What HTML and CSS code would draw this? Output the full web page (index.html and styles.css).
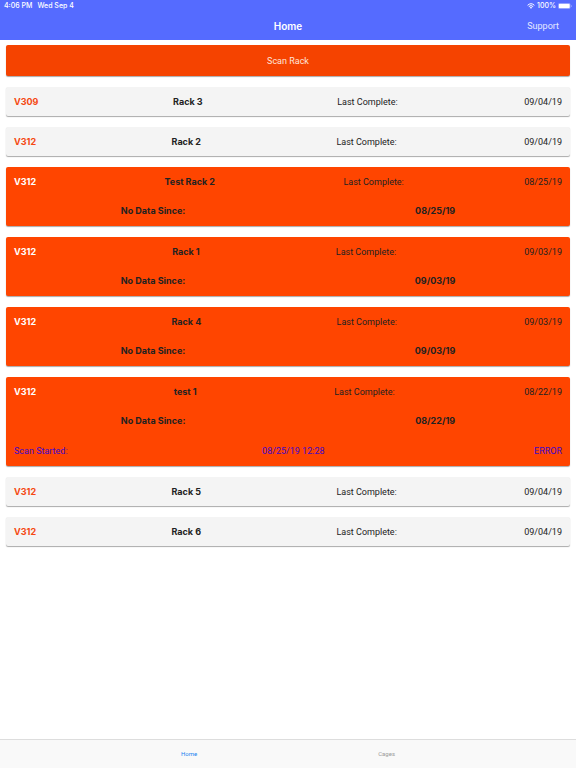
FILE: index.html
```
<!DOCTYPE html>
<html lang="en">
<head>
<meta charset="utf-8">
<meta name="viewport" content="width=device-width, initial-scale=1">
<title>Home</title>
<link rel="stylesheet" href="styles.css">
</head>
<body>
<header class="header">
  <div class="status">
    <span class="status-group"><span>4:06 PM</span><span>Wed Sep 4</span></span>
    <span class="status-power">
      <svg class="wifi" viewBox="0 0 16 12" aria-hidden="true"><path d="M1.2 4.6a10 10 0 0 1 13.6 0M3.6 7.2a6.4 6.4 0 0 1 8.8 0" fill="none" stroke="currentColor" stroke-width="2"/><path d="M8 11.6 5.4 9a3.8 3.8 0 0 1 5.2 0z" fill="currentColor"/></svg>
      <span>100%</span>
      <svg class="battery" viewBox="0 0 28 12" aria-hidden="true"><rect x=".5" y=".5" width="24" height="11" rx="3" fill="none" stroke="currentColor" opacity=".5"/><rect x="1.5" y="1.5" width="22" height="9" rx="2" fill="currentColor"/><path d="M26 4q1.5.5 1.5 2T26 8z" fill="currentColor" opacity=".5"/></svg>
    </span>
  </div>
  <div class="titlebar">
    <h1 class="title">Home</h1>
    <a class="support" href="#support">Support</a>
  </div>
</header>
<main class="content">
  <button class="scan" type="button">Scan Rack</button>
  <section class="card">
    <div class="row summary"><b class="cage">V309</b><b>Rack 3</b><span>Last Complete:</span><span>09/04/19</span></div>
  </section>
  <section class="card">
    <div class="row summary"><b class="cage">V312</b><b>Rack 2</b><span>Last Complete:</span><span>09/04/19</span></div>
  </section>
  <section class="card alert">
    <div class="row summary"><b class="cage">V312</b><b>Test Rack 2</b><span>Last Complete:</span><span>08/25/19</span></div>
    <div class="row stale"><b>No Data Since:</b><b>08/25/19</b></div>
  </section>
  <section class="card alert">
    <div class="row summary"><b class="cage">V312</b><b>Rack 1</b><span>Last Complete:</span><span>09/03/19</span></div>
    <div class="row stale"><b>No Data Since:</b><b>09/03/19</b></div>
  </section>
  <section class="card alert">
    <div class="row summary"><b class="cage">V312</b><b>Rack 4</b><span>Last Complete:</span><span>09/03/19</span></div>
    <div class="row stale"><b>No Data Since:</b><b>09/03/19</b></div>
  </section>
  <section class="card alert">
    <div class="row summary"><b class="cage">V312</b><b>test 1</b><span>Last Complete:</span><span>08/22/19</span></div>
    <div class="row stale"><b>No Data Since:</b><b>08/22/19</b></div>
    <div class="row scan-state"><span>Scan Started:</span><span>08/25/19 12:28</span><span>ERROR</span></div>
  </section>
  <section class="card">
    <div class="row summary"><b class="cage">V312</b><b>Rack 5</b><span>Last Complete:</span><span>09/04/19</span></div>
  </section>
  <section class="card">
    <div class="row summary"><b class="cage">V312</b><b>Rack 6</b><span>Last Complete:</span><span>09/04/19</span></div>
  </section>
</main>
<nav class="tabs">
  <a class="tab active" href="#home" aria-current="page">Home</a>
  <a class="tab" href="#cages">Cages</a>
</nav>
</body>
</html>
```
FILE: styles.css
```
* {
  box-sizing: border-box;
}

body {
  margin: 0;
  min-height: 100vh;
  display: flex;
  flex-direction: column;
  background: #fff;
  color: #222;
  font: 9px/12px Roboto, "Liberation Sans", sans-serif;
}

b {
  font-family: Inter, "Liberation Sans", sans-serif;
  font-weight: 700;
}

a {
  text-decoration: none;
}

.header {
  background: #556bff;
  color: #fff;
}

.status {
  display: flex;
  justify-content: space-between;
  padding: 0 4px;
  font-family: Inter, "Liberation Sans", sans-serif;
  font-size: 7px;
  font-weight: 500;
}

.status-group {
  display: flex;
  gap: 5px;
}

.status-power {
  display: flex;
  align-items: center;
  gap: 2px;
}

.wifi {
  width: 8px;
  height: 6px;
}

.battery {
  width: 14px;
  height: 6px;
}

.titlebar {
  display: grid;
  grid-template-columns: 1fr auto 1fr;
  align-items: center;
  height: 28px;
  padding: 0 17px;
}

.title {
  grid-column: 2;
  margin: 0;
  font-family: Inter, "Liberation Sans", sans-serif;
  font-size: 10px;
  font-weight: 600;
}

.support {
  justify-self: end;
  color: #e6e9ff;
}

.content {
  flex: 1;
  display: flex;
  flex-direction: column;
  gap: 11px;
  padding: 5px 6px;
}

.scan {
  height: 31px;
  border: 0;
  border-radius: 2px;
  background: #f54300;
  color: #ffe4da;
  font: inherit;
  box-shadow: 0 1px 1px #aaa;
}

.card {
  border-radius: 2px;
  background: #f4f4f4;
  box-shadow: 0 1px 1px #aaa;
}

.row {
  display: flex;
  justify-content: space-between;
  align-items: center;
  height: 29px;
  padding: 0 8px;
}

.summary > :last-child {
  margin-left: -8px;
}

.cage {
  color: #f54812;
}

.alert {
  background: #ff4500;
}

.alert .cage {
  color: #fff;
}

.stale {
  justify-content: space-around;
  height: 30px;
  padding: 0;
}

.scan-state {
  height: 30px;
  color: #4208c8;
}

.scan-state > :last-child {
  margin-left: 15px;
}

.tabs {
  display: flex;
  justify-content: space-evenly;
  align-items: center;
  height: 29px;
  border-top: 1px solid #ddd;
  background: #f9f9f9;
  font-size: 6px;
}

.tab {
  color: #999;
}

.tab.active {
  color: #2185f0;
}
```
